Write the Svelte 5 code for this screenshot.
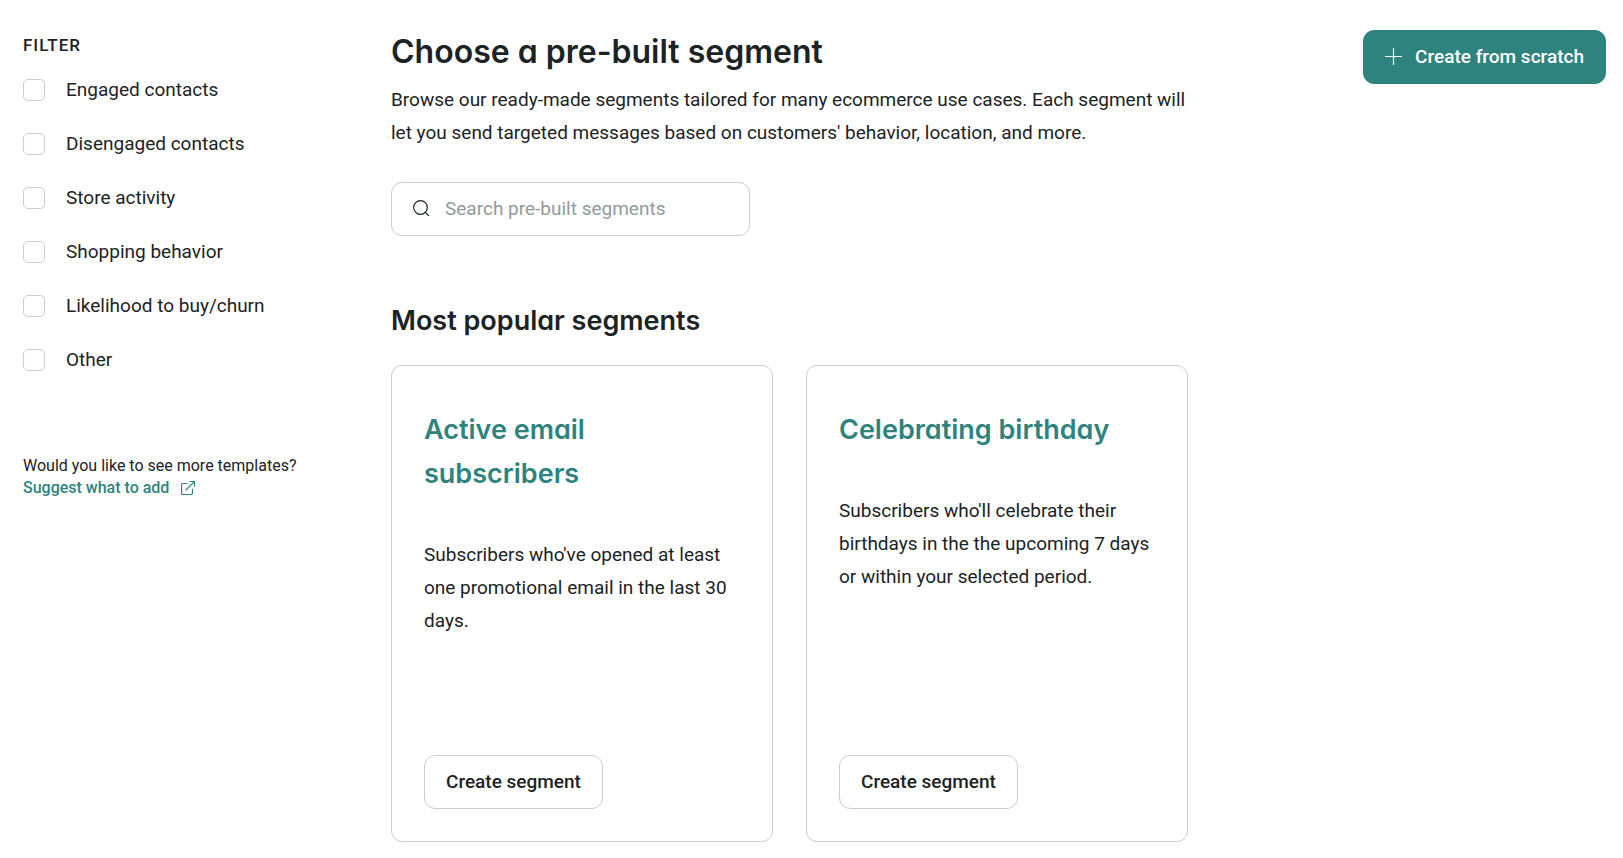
<script>
	let query = '';

	let filters = [
		{ id: 'engaged', label: 'Engaged contacts', checked: false },
		{ id: 'disengaged', label: 'Disengaged contacts', checked: false },
		{ id: 'store', label: 'Store activity', checked: false },
		{ id: 'shopping', label: 'Shopping behavior', checked: false },
		{ id: 'likelihood', label: 'Likelihood to buy/churn', checked: false },
		{ id: 'other', label: 'Other', checked: false }
	];

	const segments = [
		{
			title: 'Active email subscribers',
			text: "Subscribers who've opened at least one promotional email in the last 30 days."
		},
		{
			title: 'Celebrating birthday',
			text: "Subscribers who'll celebrate their birthdays in the the upcoming 7 days or within your selected period."
		}
	];
</script>

<div class="page">
	<aside class="sidebar">
		<fieldset class="filters">
			<legend>FILTER</legend>
			{#each filters as filter (filter.id)}
				<label class="filter">
					<input type="checkbox" bind:checked={filter.checked} />
					<span>{filter.label}</span>
				</label>
			{/each}
		</fieldset>

		<div class="suggest">
			<p>Would you like to see more templates?</p>
			<a href="#suggest">
				Suggest what to add
				<svg width="14" height="14" viewBox="0 0 14 14" aria-hidden="true">
					<path d="M6 2.5H2A1.5 1.5 0 0 0 .5 4v8A1.5 1.5 0 0 0 2 13.5h8a1.5 1.5 0 0 0 1.500-1.500V8M5 9l8.300-8.300M9 .5h4.500V5" />
				</svg>
			</a>
		</div>
	</aside>

	<main class="content">
		<h1>Choose a pre-built segment</h1>
		<p class="intro">
			Browse our ready-made segments tailored for many ecommerce use cases. Each segment will let you
			send targeted messages based on customers' behavior, location, and more.
		</p>

		<label class="search">
			<svg width="16" height="16" viewBox="0 0 16 16" aria-hidden="true">
				<circle cx="7.5" cy="7.5" r="6.8" />
				<path d="m12.200 12.200 3.300 3.300" />
			</svg>
			<input
				type="text"
				aria-label="Search pre-built segments"
				placeholder="Search pre-built segments"
				bind:value={query}
			/>
		</label>

		<h2>Most popular segments</h2>
		<div class="cards">
			{#each segments as segment}
				<article class="card">
					<h3>{segment.title}</h3>
					<p>{segment.text}</p>
					<button class="button">Create segment</button>
				</article>
			{/each}
		</div>
	</main>

	<button class="button primary">
		<svg width="17" height="17" viewBox="0 0 17 17" aria-hidden="true">
			<path d="M8.5 .5v16M.5 8.5h16" />
		</svg>
		Create from scratch
	</button>
</div>

<style>
	:global(body) {
		background: #fff;
	}

	.page {
		display: flex;
		align-items: flex-start;
		padding: 30px 17px 16px 23px;
		font-family: Roboto, 'Liberation Sans', sans-serif;
		font-size: 19px;
		line-height: 33px;
		color: #1c2324;
	}

	h1,
	h2,
	h3,
	p {
		margin: 0;
	}

	h1,
	h2,
	h3 {
		font-family: Inter, 'Open Sans', sans-serif;
		font-weight: 600;
		/* single-storey a */
		font-feature-settings: 'cv11';
	}

	svg {
		flex: none;
		fill: none;
		stroke: currentColor;
		stroke-width: 1.2;
		stroke-linecap: round;
		stroke-linejoin: round;
	}

	.sidebar {
		flex: 0 0 336px;
		margin-right: 32px;
	}

	.filters {
		display: flex;
		flex-direction: column;
		gap: 21px;
		margin: 0;
		padding: 0;
		border: 0;
	}

	.filters legend {
		margin-bottom: 12px;
		padding: 0;
		font-size: 17px;
		font-weight: 500;
		line-height: 31px;
		letter-spacing: 1px;
	}

	.filter {
		display: flex;
		align-items: center;
		gap: 21px;
		cursor: pointer;
	}

	.filter input {
		appearance: none;
		flex: none;
		width: 22px;
		height: 22px;
		margin: 0;
		border: 1px solid #c7cecd;
		border-radius: 5px;
		background: #fff;
	}

	.filter input:checked {
		border-color: #2f837f;
		background: #2f837f;
	}

	.suggest {
		margin-top: 79px;
		font-size: 16px;
		line-height: 22px;
	}

	.suggest a {
		display: inline-flex;
		align-items: center;
		gap: 12px;
		font-weight: 500;
		color: #2f837f;
		text-decoration: none;
	}

	.content {
		flex: 0 1 797px;
		min-width: 0;
	}

	h1 {
		font-size: 32px;
		line-height: 44px;
		margin-bottom: 9px;
	}

	.search {
		display: flex;
		align-items: center;
		gap: 16px;
		box-sizing: border-box;
		width: 100%;
		max-width: 359px;
		height: 54px;
		margin-top: 33px;
		padding: 0 21px 2px;
		border: 1px solid #c7cecd;
		border-radius: 11px;
	}

	.search input {
		flex: 1;
		min-width: 0;
		height: 44px;
		padding: 0;
		border: 0;
		outline: 0;
		background: none;
		font: inherit;
		color: inherit;
	}

	.search input::placeholder {
		color: #919b9b;
		opacity: 1;
	}

	h2 {
		margin-top: 63px;
		margin-bottom: 22px;
		font-size: 27px;
		line-height: 44px;
	}

	.cards {
		display: grid;
		grid-template-columns: repeat(auto-fit, minmax(300px, 1fr));
		gap: 33px;
	}

	.card {
		display: flex;
		flex-direction: column;
		align-items: flex-start;
		box-sizing: border-box;
		min-height: 477px;
		padding: 42px 32px 32px;
		border: 1px solid #c7cecd;
		border-radius: 11px;
	}

	h3 {
		margin-bottom: 42px;
		font-size: 27px;
		line-height: 44px;
		color: #2f837f;
	}

	.button {
		display: flex;
		align-items: center;
		gap: 13px;
		box-sizing: border-box;
		height: 54px;
		padding: 0 21px 2px;
		border: 1px solid #c7cecd;
		border-radius: 11px;
		background: #fff;
		font: inherit;
		font-weight: 500;
		color: inherit;
		white-space: nowrap;
		cursor: pointer;
	}

	.card .button {
		margin-top: auto;
	}

	.primary {
		margin-left: auto;
		border-color: #2f837f;
		background: #2f837f;
		color: #fff;
	}

	@media (max-width: 1000px) {
		.page {
			flex-direction: column;
			gap: 32px;
		}

		.sidebar {
			flex: none;
		}

		.primary {
			order: -1;
		}
	}
</style>
